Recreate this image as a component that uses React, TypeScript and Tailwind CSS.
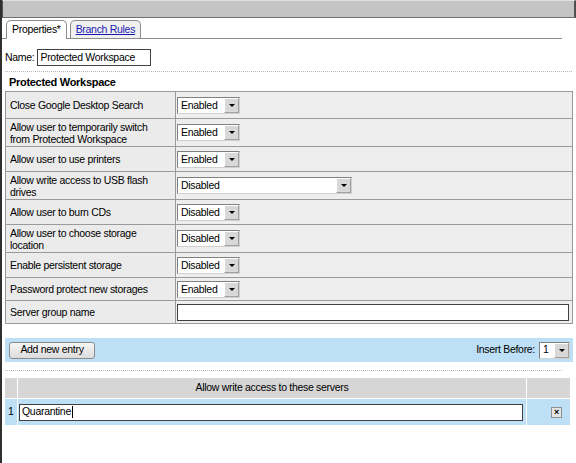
import React from "react";

const font = { fontFamily: '"Liberation Sans", Arial, sans-serif' };

const Arrow = () => (
	<div className="w-[15px] h-[15px] bg-[#d8d8d8] border border-[#a0a0a0] border-l-white border-t-white flex items-center justify-center">
		<div className="w-0 h-0 border-l-[3px] border-r-[3px] border-t-[3px] border-l-transparent border-r-transparent border-t-black" />
	</div>
);

const Select = ({ value, wide }: { value: string; wide?: boolean }) => (
	<div
		className={`flex items-center h-[17px] bg-white border border-[#808080] border-r-[#d0d0d0] border-b-[#d0d0d0] ${
			wide ? "w-[175px]" : "w-[63px]"
		}`}
	>
		<span className="flex-1 pl-[3px] leading-none">{value}</span>
		<Arrow />
	</div>
);

type Row = { label: string; h: string; value?: string; wide?: boolean; input?: boolean };

const rows: Row[] = [
	{ label: "Close Google Desktop Search", h: "h-[26px]", value: "Enabled" },
	{
		label: "Allow user to temporarily switch from Protected Workspace",
		h: "h-[28px]",
		value: "Enabled",
	},
	{ label: "Allow user to use printers", h: "h-[25px]", value: "Enabled" },
	{
		label: "Allow write access to USB flash drives",
		h: "h-[28px]",
		value: "Disabled",
		wide: true,
	},
	{ label: "Allow user to burn CDs", h: "h-[25px]", value: "Disabled" },
	{
		label: "Allow user to choose storage location",
		h: "h-[28px]",
		value: "Disabled",
	},
	{ label: "Enable persistent storage", h: "h-[25px]", value: "Disabled" },
	{ label: "Password protect new storages", h: "h-[23px]", value: "Enabled" },
	{ label: "Server group name", h: "h-[23px]", input: true },
];

const App = () => {
	return (
		<div
			className="w-[576px] h-[463px] bg-white text-[10.5px] tracking-[-0.3px] text-black border-l-2 border-[#303030] overflow-hidden"
			style={font}
		>
			{/* top bar */}
			<div className="h-[18px] bg-[#c4c4c4] border border-[#505050] border-r-2 border-b-[#707070] border-t-[#e0e0e0]" />

			{/* tabs */}
			<div className="flex items-end gap-[3px] pl-[4px] mt-[2px] h-[19px] border-b border-[#8c8c8c] mr-[14px]">
				<div className="h-[19px] -mb-px px-[5px] bg-white border border-b-0 border-[#8c8c8c] rounded-t-[5px] flex items-center">
					Properties*
				</div>
				<div className="h-[18px] px-[5px] bg-[#f0f0f0] border border-b-0 border-[#8c8c8c] rounded-t-[5px] flex items-center">
					<span className="text-[#1a1ab0] underline">Branch Rules</span>
				</div>
			</div>

			{/* name */}
			<div className="flex items-center gap-[3px] pl-[3px] mt-[10px]">
				<span>Name:</span>
				<div className="w-[114px] h-[17px] border border-[#404040] flex items-center pl-[2px]">
					Protected Workspace
				</div>
			</div>

			<div className="mt-[5px] ml-[3px] mr-[4px] border-t border-dotted border-[#b8b8b8]" />

			<div className="font-bold text-[11px] pl-[7px] mt-[4px] h-[13px] leading-[13px]">
				Protected Workspace
			</div>

			{/* properties table */}
			<div className="ml-[3px] mr-[3px] mt-[2px] border border-[#9a9a9a]">
				{rows.map((r, i) => (
					<div
						key={i}
						className={`flex ${r.h} ${i > 0 ? "border-t border-[#9a9a9a]" : ""}`}
					>
						<div className="w-[170px] bg-[#ebebeb] border-r border-[#9a9a9a] flex items-center pl-[4px] pr-[10px] leading-[12px]">
							{r.label}
						</div>
						<div className="flex-1 bg-[#eeeeee] flex items-center pl-[1px] pr-[3px]">
							{r.input ? (
								<div className="w-full h-[17px] bg-white border border-[#404040]" />
							) : (
								<Select value={r.value!} wide={r.wide} />
							)}
						</div>
					</div>
				))}
			</div>

			{/* add entry bar */}
			<div className="mt-[14px] ml-[3px] mr-[3px] h-[24px] bg-[#bde0f6] flex items-center justify-between pl-[4px] pr-[3px]">
				<div className="h-[17px] w-[86px] rounded-[3px] border border-[#8a8a8a] bg-gradient-to-b from-[#f6f6f6] to-[#dcdcdc] flex items-center justify-center">
					Add new entry
				</div>
				<div className="flex items-center gap-[4px]">
					<span>Insert Before:</span>
					<div className="flex items-center h-[17px] w-[31px] bg-white border border-[#808080] border-r-[#d0d0d0] border-b-[#d0d0d0]">
						<span className="flex-1 pl-[3px]">1</span>
						<Arrow />
					</div>
				</div>
			</div>

			<div className="mt-[8px] ml-[3px] mr-[14px] border-t border-dotted border-[#b8b8b8]" />

			{/* servers table */}
			<div className="mt-[7px] ml-[3px] mr-[6px]">
				<div className="flex h-[20px] bg-[#d6d6d6]">
					<div className="w-[13px] border-r border-white" />
					<div className="flex-1 flex items-center justify-center border-r border-white">
						Allow write access to these servers
					</div>
					<div className="w-[43px]" />
				</div>
				<div className="flex h-[27px] bg-[#bde0f6] border-t border-white">
					<div className="w-[13px] flex items-center pl-[3px] border-r border-white">
						1
					</div>
					<div className="flex-1 flex items-center pl-[1px] pr-[3px] border-r border-white">
						<div className="w-full h-[17px] bg-white border border-[#404040] flex items-center pl-[2px]">
							Quarantine
							<span className="w-px h-[12px] bg-black ml-px" />
						</div>
					</div>
					<div className="w-[43px] flex items-center justify-center pl-[16px]">
						<div className="w-[11px] h-[11px] bg-[#e4e4e4] border border-[#909090] flex items-center justify-center text-[9px] leading-none font-bold">
							×
						</div>
					</div>
				</div>
			</div>
		</div>
	);
};

export default App;
